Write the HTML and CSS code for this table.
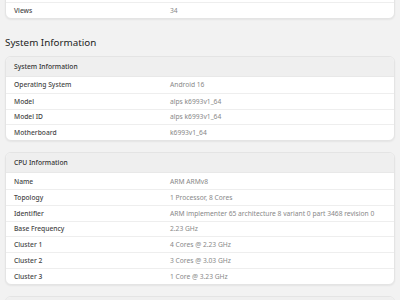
FILE: index.html
```html
<!DOCTYPE html>
<html lang="en">
<head>
  <meta charset="UTF-8" />
  <meta name="viewport" content="width=device-width, initial-scale=1.0" />
  <title>Device Details</title>
  <link rel="stylesheet" href="styles.css">
</head>
<body>
  <div id="page">
    <!-- App Statistics (scrolled) -->
    <div class="card card-scrolled">
      <div class="row">
        <span class="label">Downloads</span>
        <span class="value">12</span>
      </div>
      <div class="row">
        <span class="label">Views</span>
        <span class="value">34</span>
      </div>
    </div>

    <h2 class="section-title">System Information</h2>

    <div class="card">
      <div class="card-header">System Information</div>
      <div class="row">
        <span class="label">Operating System</span>
        <span class="value">Android 16</span>
      </div>
      <div class="row">
        <span class="label">Model</span>
        <span class="value">alps k6993v1_64</span>
      </div>
      <div class="row">
        <span class="label">Model ID</span>
        <span class="value">alps k6993v1_64</span>
      </div>
      <div class="row">
        <span class="label">Motherboard</span>
        <span class="value">k6993v1_64</span>
      </div>
    </div>

    <div class="card">
      <div class="card-header">CPU Information</div>
      <div class="row">
        <span class="label">Name</span>
        <span class="value">ARM ARMv8</span>
      </div>
      <div class="row">
        <span class="label">Topology</span>
        <span class="value">1 Processor, 8 Cores</span>
      </div>
      <div class="row">
        <span class="label">Identifier</span>
        <span class="value">ARM implementer 65 architecture 8 variant 0 part 3468 revision 0</span>
      </div>
      <div class="row">
        <span class="label">Base Frequency</span>
        <span class="value">2.23 GHz</span>
      </div>
      <div class="row">
        <span class="label">Cluster 1</span>
        <span class="value">4 Cores @ 2.23 GHz</span>
      </div>
      <div class="row">
        <span class="label">Cluster 2</span>
        <span class="value">3 Cores @ 3.03 GHz</span>
      </div>
      <div class="row">
        <span class="label">Cluster 3</span>
        <span class="value">1 Core @ 3.23 GHz</span>
      </div>
    </div>

    <div class="card">
      <div class="card-header">Memory Information</div>
    </div>
  </div>
</body>
</html>
```

FILE: styles.css
```css
/* Reset and Basic Styles */
* {
  margin: 0;
  padding: 0;
  box-sizing: border-box;
}
body {
  font-family: 'Noto Sans', 'DejaVu Sans', sans-serif;
  background: #f2f2f2;
  color: #333;
  overflow: hidden;
}
#page {
  padding: 0 5px;
}
/* Cards */
.card {
  background: #fff;
  border: 1px solid #e4e4e4;
  border-radius: 6px;
  box-shadow: 0 1px 2px rgba(0, 0, 0, 0.06);
  overflow: hidden;
  margin-bottom: 11px;
}
.card-scrolled {
  margin-top: -14.6px;
  margin-bottom: 0;
  border-top-left-radius: 0;
  border-top-right-radius: 0;
}
.card-header {
  height: 20px;
  display: flex;
  align-items: center;
  padding: 0 8px;
  background: #efefef;
  font-size: 6.7px;
  font-weight: 500;
  color: #333;
  border-bottom: 1px solid #e8e8e8;
}
.row {
  display: grid;
  grid-template-columns: 156px 1fr;
  align-items: center;
  height: 15.8px;
  padding: 0 8px;
  font-size: 6.7px;
  border-top: 1px solid #eeeeee;
}
.card-header + .row,
.card-scrolled .row:first-child {
  border-top: none;
}
.label {
  color: #444;
  font-weight: 500;
}
.value {
  color: #888;
  white-space: nowrap;
}
/* Section heading */
.section-title {
  font-size: 9.8px;
  font-weight: 400;
  color: #222;
  line-height: 14px;
  margin: 17px 0 6px;
}
```
